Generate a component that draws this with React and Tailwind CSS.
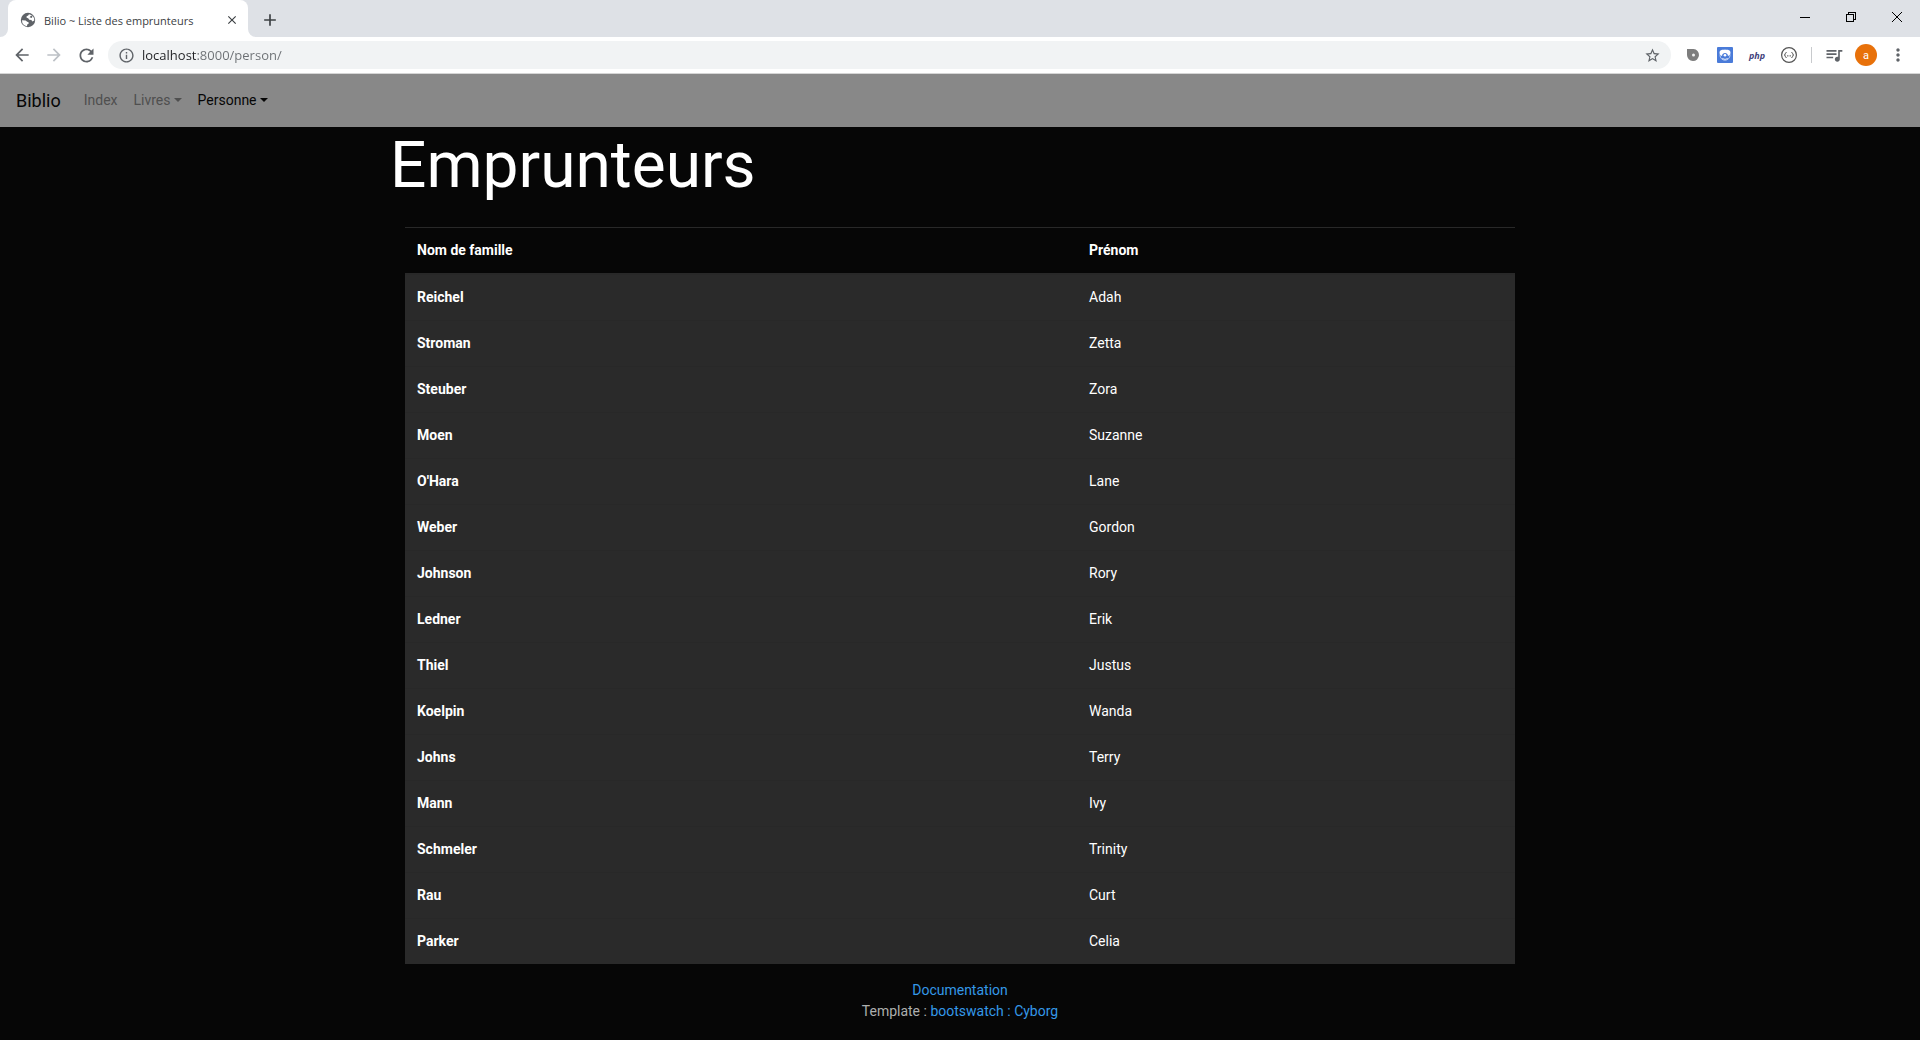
import {
  MdAdd,
  MdArrowBack,
  MdArrowForward,
  MdClose,
  MdInfoOutline,
  MdMoreVert,
  MdQueueMusic,
  MdRefresh,
  MdStarBorder,
} from "react-icons/md";

const borrowers = [
  ["Reichel", "Adah"],
  ["Stroman", "Zetta"],
  ["Steuber", "Zora"],
  ["Moen", "Suzanne"],
  ["O'Hara", "Lane"],
  ["Weber", "Gordon"],
  ["Johnson", "Rory"],
  ["Ledner", "Erik"],
  ["Thiel", "Justus"],
  ["Koelpin", "Wanda"],
  ["Johns", "Terry"],
  ["Mann", "Ivy"],
  ["Schmeler", "Trinity"],
  ["Rau", "Curt"],
  ["Parker", "Celia"],
];

function ToolButton({ label, children }) {
  return (
    <button type="button" aria-label={label} className="flex h-8 w-8 shrink-0 items-center justify-center text-[#5f6368]">
      {children}
    </button>
  );
}

function WindowButton({ label, children }) {
  return (
    <button type="button" aria-label={label} className="flex h-7 w-[46px] items-center justify-center">
      <svg width="10" height="10" viewBox="0 0 10 10" fill="none" stroke="#000" shapeRendering="crispEdges">
        {children}
      </svg>
    </button>
  );
}

function TabFlare({ flip }) {
  return (
    <svg width="8" height="8" viewBox="0 0 8 8" className={flip ? "-scale-x-100 self-end" : "self-end"}>
      <path d="M8 0v8H0a8 8 0 0 0 8-8z" fill="#fff" />
    </svg>
  );
}

function Globe() {
  return (
    <svg width="16" height="16" viewBox="0 0 16 16" className="shrink-0">
      <circle cx="8" cy="8" r="7.200" fill="#5f6368" />
      <path d="M9 2.200L8.200 3.600 6.600 4.200v1.600l1.600.4 1 1.600 2.200.2.900 1.600 2-1A6 6 0 0 0 9 2.200z" fill="#fff" />
      <path d="M2 8.200l3.600.2 1.600 1.400 1.400.4v1.600l-1.400.6-.2 1.800A6 6 0 0 1 2 8.200z" fill="#fff" />
      <path d="M9.600 5.200l1.600-1.600 1.400.8-1 1.600z" fill="#5f6368" />
    </svg>
  );
}

function TabStrip() {
  return (
    <div className="flex h-[37px] bg-[#dee1e6]">
      <TabFlare />
      <div className="flex w-60 items-center rounded-t-lg bg-white pr-2 pl-3 pt-[3px]">
        <Globe />
        <span className="ml-2 grow whitespace-nowrap text-[11px] text-[#3c4043]">Bilio ~ Liste des emprunteurs</span>
        <button type="button" aria-label="Fermer l'onglet" className="flex h-4 w-4 items-center justify-center text-[#3c4043]">
          <MdClose size={14} />
        </button>
      </div>
      <TabFlare flip />
      <button type="button" aria-label="Nouvel onglet" className="flex w-7 items-center justify-center pt-[3px] text-[#3c4043]">
        <MdAdd size={20} />
      </button>
      <div className="ml-auto flex pt-[3px]">
        <WindowButton label="Réduire">
          <path d="M0 5.500h10" />
        </WindowButton>
        <WindowButton label="Restaurer">
          <path d="M.5 2.500h7v7h-7zM2.500 2.500v-2h7v7h-2" />
        </WindowButton>
        <WindowButton label="Fermer">
          <path d="M0 0l10 10M10 0L0 10" shapeRendering="auto" />
        </WindowButton>
      </div>
    </div>
  );
}

function Toolbar() {
  return (
    <div className="flex h-[37px] items-center border-b border-[#d5d5d5] bg-white px-[6px]">
      <ToolButton label="Précédent">
        <MdArrowBack size={20} />
      </ToolButton>
      <ToolButton label="Suivant">
        <MdArrowForward size={20} className="text-[#bdc1c6]" />
      </ToolButton>
      <ToolButton label="Actualiser">
        <MdRefresh size={21} />
      </ToolButton>
      <div className="mx-[6px] flex h-7 grow items-center rounded-full bg-[#f1f3f4] px-[10px]">
        <MdInfoOutline size={17} color="#5f6368" />
        <input
          type="text"
          aria-label="Adresse"
          defaultValue="localhost:8000/person/"
          className="ml-[7px] grow bg-[linear-gradient(to_right,#202124_55px,#6b6f73_55px)] bg-clip-text text-[13px] text-transparent outline-none"
        />
        <button type="button" aria-label="Ajouter aux favoris" className="text-[#5f6368]">
          <MdStarBorder size={17} />
        </button>
      </div>
      <ToolButton label="Extension goutte">
        <svg width="14" height="14" viewBox="0 0 14 14">
          <path d="M1 1h6.500a6 6 0 1 1-6.500 6z" fill="#7d7d7d" />
          <circle cx="7.500" cy="7" r="1.500" fill="#f1f1f1" />
        </svg>
      </ToolButton>
      <ToolButton label="Extension bleue">
        <svg width="16" height="16" viewBox="0 0 16 16">
          <rect width="16" height="16" rx="1" fill="#4a7bd9" />
          <circle cx="8" cy="8.200" r="5" fill="none" stroke="#b9cef5" strokeWidth="1" />
          <path d="M2.500 5C3.500 2.200 6 2.800 8 2.800S12.500 2.200 13.500 5c0 2.500-1 3.500-2.500 4C10.800 6.800 9.500 6 8 6S5.200 6.800 5 9C3.500 8.500 2.500 7.500 2.500 5z" fill="#fff" />
          <circle cx="8" cy="8.300" r="1.300" fill="#fff" />
          <path d="M5.200 11.500q2.800 1.800 5.600 0" fill="none" stroke="#dce7fc" />
        </svg>
      </ToolButton>
      <ToolButton label="Extension PHP">
        <span className="font-['Open_Sans',sans-serif] text-[9px] font-bold text-[#43437c] italic">php</span>
      </ToolButton>
      <ToolButton label="Extension JSON">
        <svg width="16" height="16" viewBox="0 0 16 16" fill="none" stroke="#555">
          <circle cx="8" cy="8" r="7.400" strokeWidth="1.200" />
          <path d="M5.600 5.500q-1.300 0-1.300 1.200T3.300 8q1 0 1 1.300t1.300 1.200M10.400 5.500q1.300 0 1.300 1.200T12.700 8q-1 0-1 1.300t-1.300 1.200" />
          <path d="M6 8.900h1M7.500 8.900h1M9 8.900h1" />
        </svg>
      </ToolButton>
      <div className="mx-[6px] h-4 w-px bg-[#c8cacd]" />
      <ToolButton label="Commandes multimédias">
        <MdQueueMusic size={20} />
      </ToolButton>
      <ToolButton label="Profil">
        <span className="flex h-[22px] w-[22px] items-center justify-center rounded-full bg-[#e8710a] font-['Roboto',sans-serif] text-[11px] text-white">
          a
        </span>
      </ToolButton>
      <ToolButton label="Menu">
        <MdMoreVert size={20} />
      </ToolButton>
    </div>
  );
}

function Caret() {
  return <span className="ml-[3px] inline-block border-x-4 border-t-4 border-x-transparent align-[3px]" />;
}

function SiteNav() {
  return (
    <nav className="flex items-center bg-[#888] px-4 py-2">
      <a href="#" className="mr-[15px] text-[18px] leading-7 text-[#060606]">
        Biblio
      </a>
      <a href="#" className="p-2 text-[#4f4f4f]">
        Index
      </a>
      <button type="button" className="p-2 text-[#4f4f4f]">
        Livres
        <Caret />
      </button>
      <button type="button" className="p-2 text-[#060606]">
        Personne
        <Caret />
      </button>
    </nav>
  );
}

export default function App() {
  return (
    <div className="min-h-screen bg-[#060606] font-['Roboto',sans-serif] text-[14px] leading-[21px] text-[#adafae]">
      <header className="font-['Open_Sans',sans-serif]">
        <TabStrip />
        <Toolbar />
      </header>
      <SiteNav />
      <main className="mx-auto max-w-[1140px]">
        <h1 className="text-[64px] leading-[77px] text-white">Emprunteurs</h1>
        <div className="px-[15px] pt-[23px]">
          <table className="w-full border-collapse text-left text-white">
            <thead>
              <tr className="border-t border-b-2 border-[#282828]">
                <th className="w-[672px] p-3 font-bold">Nom de famille</th>
                <th className="p-3 font-bold">Prénom</th>
              </tr>
            </thead>
            <tbody>
              {borrowers.map(([last, first]) => (
                <tr key={last} className="border-t border-[#282828] bg-[#2a2a2a]">
                  <th scope="row" className="p-3 font-bold">
                    {last}
                  </th>
                  <td className="p-3">{first}</td>
                </tr>
              ))}
            </tbody>
          </table>
        </div>
      </main>
      <footer className="pt-4 text-center">
        <p>
          <a href="#" className="text-[#3498e8]">
            Documentation
          </a>
        </p>
        <p>
          Template :{" "}
          <a href="#" className="text-[#3498e8]">
            bootswatch : Cyborg
          </a>
        </p>
      </footer>
    </div>
  );
}
